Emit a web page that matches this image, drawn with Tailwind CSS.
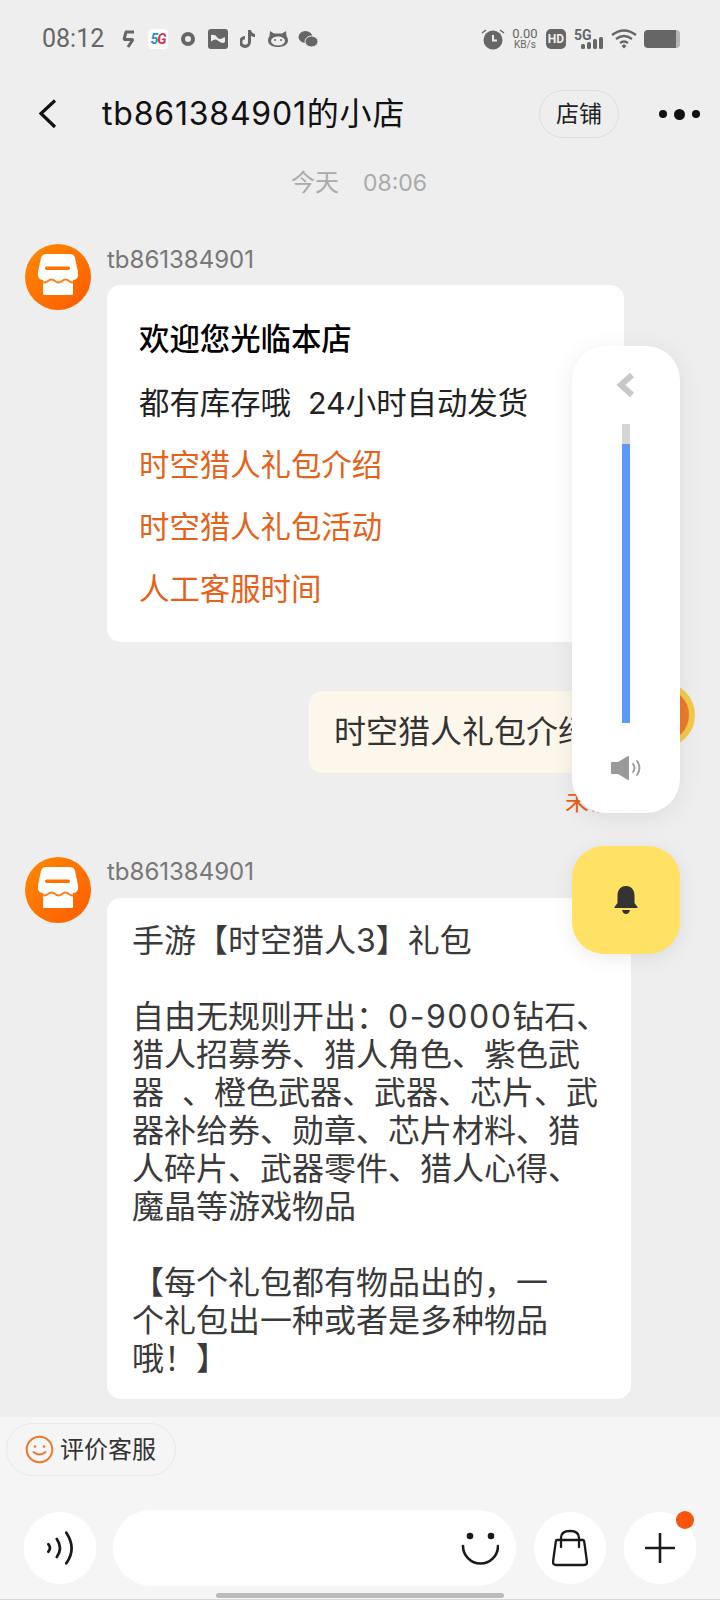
<!DOCTYPE html>
<html lang="zh">
<head>
  <meta charset="UTF-8">
  <meta name="viewport" content="width=device-width, initial-scale=1.0">
  <title>tb861384901的小店</title>
  <script src="https://cdn.jsdelivr.net/npm/@tailwindcss/browser@4"></script>
</head>
<body class="bg-[#eeeeee]">
  <div class="relative w-[720px] h-[1600px] overflow-hidden flex flex-col bg-[#eeeeee] text-[#333333] font-['Inter','Noto_Sans_CJK_SC',sans-serif]">

    <!-- status bar -->
    <div class="h-[76px] shrink-0 flex items-center pt-[2px] pl-[42px] pr-[40px] text-[#666666]">
      <span class="text-[25px] w-[79px] font-['Roboto',sans-serif]">08:12</span>
      <svg class="w-[15px] h-[19px]" viewBox="0 0 15 19"><path d="M4 2h9M5 2L3 9.500h9L7 17" fill="none" stroke="#666" stroke-width="3" stroke-linejoin="bevel"/></svg>
      <div class="ml-[12px] w-[20px] h-[20px] rounded-[4px] bg-white flex items-center justify-center text-[14px] font-bold italic tracking-[-1px] font-['Roboto',sans-serif]"><span class="text-[#2a8fd0]">5</span><span class="text-[#d8343c]">G</span></div>
      <svg class="ml-[13px] w-[14px] h-[14px]" viewBox="0 0 14 14"><circle cx="7" cy="7" r="5" fill="none" stroke="#666" stroke-width="4"/></svg>
      <svg class="ml-[13px] w-[20px] h-[20px]" viewBox="0 0 20 20"><rect width="20" height="20" rx="3" fill="#666"/><path d="M3 6q4-1 6 2t5 1.500 3-1.500v5q-2 1.500-4 .5t-4-2.500-6 1.500z" fill="#eee"/></svg>
      <svg class="ml-[12px] w-[16px] h-[20px]" viewBox="0 0 16 20"><path d="M8 1h3q.5 3 4 4v3q-2.500 0-4-1.200V13a6 6 0 1 1-6-6v3.200a2.800 2.800 0 1 0 3 2.800z" fill="#666"/></svg>
      <svg class="ml-[12px] w-[20px] h-[18px]" viewBox="0 0 20 18"><path d="M2 1l4 2.500h8L18 1l.5 5q1.500 2 1.500 4.500C20 15 15 17 10 17S0 15 0 10.500Q0 8 1.500 6z" fill="#666"/><ellipse cx="10" cy="11" rx="7" ry="4.500" fill="#eee"/><circle cx="7" cy="10" r="1" fill="#666"/><circle cx="13" cy="10" r="1" fill="#666"/></svg>
      <svg class="ml-[10px] w-[20px] h-[18px]" viewBox="0 0 20 18"><ellipse cx="7.500" cy="7" rx="7" ry="6" fill="#666"/><ellipse cx="13.500" cy="11.500" rx="6.500" ry="5.500" fill="#666" stroke="#eee" stroke-width="1"/></svg>

      <svg class="ml-auto w-[24px] h-[22px]" viewBox="0 0 24 22"><circle cx="12" cy="12" r="9.500" fill="#666"/><path d="M12 7v5.500h4" fill="none" stroke="#eee" stroke-width="2"/><path d="M1 5l4-3M23 5l-4-3" stroke="#666" stroke-width="1.500"/></svg>
      <div class="ml-[7px] w-[26px] flex flex-col items-center leading-[11px] font-['Roboto',sans-serif]"><span class="text-[13px]">0.00</span><span class="text-[10px]">KB/s</span></div>
      <div class="ml-[8px] w-[20px] h-[20px] rounded-[5px] bg-[#666666] text-[#eeeeee] text-[12px] font-bold flex items-center justify-center font-['Roboto',sans-serif]">HD</div>
      <div class="ml-[8px] relative w-[30px] h-[20px]">
        <span class="absolute left-0 top-[-4px] text-[14px] font-bold font-['Roboto',sans-serif]">5G</span>
        <svg class="absolute left-0 top-0 w-[30px] h-[20px]" viewBox="0 0 30 20"><rect x="7" y="15" width="4" height="5" rx="1.500" fill="#666"/><rect x="13" y="13" width="4" height="7" rx="1.500" fill="#666"/><rect x="19" y="10" width="4" height="10" rx="1.500" fill="#666"/><rect x="25" y="8" width="4" height="12" rx="1.500" fill="#666"/></svg>
      </div>
      <svg class="ml-[7px] w-[26px] h-[20px]" viewBox="0 0 26 20"><path d="M1 6q12-9 24 0M5 10q8-6 16 0M9 14q4-3 8 0" fill="none" stroke="#666" stroke-width="2.200"/><path d="M10.500 17l2.500-2 2.500 2-2.500 2.500z" fill="#666"/></svg>
      <div class="ml-[7px] flex items-center">
        <div class="w-[32px] h-[18px] bg-[#666666] rounded-l-[4px]"></div>
        <div class="w-[4px] h-[18px] bg-[#b5b5b5] rounded-r-[4px]"></div>
      </div>
    </div>

    <!-- nav -->
    <div class="h-[76px] shrink-0 flex items-center text-black">
      <svg class="ml-[38px] w-[20px] h-[32px]" viewBox="0 0 20 32"><path d="M17 2.500L3 15.500 17 29" fill="none" stroke="#111" stroke-width="3.200"/></svg>
      <h1 class="ml-[44px] w-[437px] text-[32px] tracking-[.8px] text-[#111111] whitespace-nowrap">tb861384901的小店</h1>
      <div class="w-[80px] h-[48px] rounded-full border border-[#dddddd] flex items-center justify-center text-[23px] text-[#222222]">店铺</div>
      <div class="ml-[40px] flex items-center gap-[4px]">
        <span class="w-[8px] h-[8px] rounded-full bg-[#111111]"></span>
        <span class="w-[11px] h-[11px] rounded-full bg-[#111111] mx-[3px]"></span>
        <span class="w-[8px] h-[8px] rounded-full bg-[#111111]"></span>
      </div>
    </div>

    <!-- messages -->
    <div class="h-[62px] shrink-0 flex items-center pl-[291px] gap-[24px] text-[24px] text-[#aaaaaa]">
      <span>今天</span><span class="text-[23px]">08:06</span>
    </div>

    <div class="flex-1 min-h-0 overflow-hidden pt-[30px] pl-[25px]">
      <div class="flex">
        <svg class="w-[66px] h-[66px] shrink-0" viewBox="0 0 66 66">
          <defs><linearGradient id="av1" x1="0" y1="0" x2="1" y2="1"><stop offset="0" stop-color="#ff8a00"/><stop offset="1" stop-color="#ff5a00"/></linearGradient></defs>
          <circle cx="33" cy="33" r="33" fill="url(#av1)"/>
          <path d="M20 10h25q4 0 5 4l3 14q1 8-5 8v14q0 1-1.500 1h-27q-1.500 0-1.500-1V36q-6 0-5-8l3-14q1-4 5-4z" fill="#fff"/>
          <path d="M16 37q3.500 3 7 0t7 0 7 0 7 0 6 0" fill="none" stroke="#ff7a10" stroke-width="1.800"/>
          <rect x="20" y="22.500" width="25" height="3.500" rx="1.750" fill="#ff7200"/>
        </svg>
        <div class="ml-[16px]">
          <div class="h-[30px] leading-[32px] text-[24px] text-[#777777]">tb861384901</div>
          <div class="mt-[11px] w-[517px] h-[357px] bg-white rounded-[14px] pt-[23px] pl-[32px] text-[30.4px] text-[#222222]">
            <div class="h-[62px] leading-[62px] mb-[2px] font-medium text-black">欢迎您光临本店</div>
            <div class="h-[62px] leading-[62px]">都有库存哦&nbsp;&nbsp;24小时自动发货</div>
            <div class="h-[62px] leading-[62px] text-[#e6611a]">时空猎人礼包介绍</div>
            <div class="h-[62px] leading-[62px] text-[#e6611a]">时空猎人礼包活动</div>
            <div class="h-[62px] leading-[62px] text-[#e6611a]">人工客服时间</div>
          </div>
        </div>
      </div>

      <div class="mt-[49px] flex pl-[284px]">
        <div class="w-[306px] h-[82px] rounded-[14px] bg-[#fdf6ea] pl-[25px] leading-[82px] text-[32px] whitespace-nowrap">时空猎人礼包介绍</div>
        <svg class="ml-[14px] -mt-[9px] w-[66px] h-[66px] shrink-0" viewBox="0 0 66 66"><circle cx="33" cy="33" r="30" fill="#ec7a2c" stroke="#f1cb4c" stroke-width="6"/></svg>
      </div>
      <div class="h-[46px] leading-[58px] pl-[540px] text-[24px] text-[#e6611a]">未读</div>

      <div class="mt-[38px] flex">
        <svg class="w-[66px] h-[66px] shrink-0" viewBox="0 0 66 66">
          <defs><linearGradient id="av2" x1="0" y1="0" x2="1" y2="1"><stop offset="0" stop-color="#ff8a00"/><stop offset="1" stop-color="#ff5a00"/></linearGradient></defs>
          <circle cx="33" cy="33" r="33" fill="url(#av2)"/>
          <path d="M20 10h25q4 0 5 4l3 14q1 8-5 8v14q0 1-1.500 1h-27q-1.500 0-1.500-1V36q-6 0-5-8l3-14q1-4 5-4z" fill="#fff"/>
          <path d="M16 37q3.500 3 7 0t7 0 7 0 7 0 6 0" fill="none" stroke="#ff7a10" stroke-width="1.800"/>
          <rect x="20" y="22.500" width="25" height="3.500" rx="1.750" fill="#ff7200"/>
        </svg>
        <div class="ml-[16px]">
          <div class="h-[30px] leading-[30px] text-[24px] text-[#777777]">tb861384901</div>
          <div class="mt-[11px] w-[524px] h-[501px] bg-white rounded-[14px] pt-[24px] pl-[25px] text-[32px] leading-[38px] whitespace-nowrap text-[#3a3a3a]">
            手游【时空猎人3】礼包<br><br>
            自由无规则开出：<span class="tracking-[1.500px]">0-9000</span>钻石、<br>
            猎人招募券、猎人角色、紫色武<br>
            器&nbsp;&nbsp;、橙色武器、武器、芯片、武<br>
            器补给券、勋章、芯片材料、猎<br>
            人碎片、武器零件、猎人心得、<br>
            魔晶等游戏物品<br><br>
            【每个礼包都有物品出的，一<br>
            个礼包出一种或者是多种物品<br>
            哦！】
          </div>
        </div>
      </div>
    </div>

    <!-- bottom bar -->
    <div class="h-[183px] shrink-0 bg-[#f5f5f5] relative">
      <div class="mt-[6px] ml-[6px] w-[170px] h-[53px] rounded-full border border-[#e8e8e8] flex items-center pl-[18px] text-[24px] text-[#333333]">
        <svg class="w-[29px] h-[29px] shrink-0" viewBox="0 0 29 29"><circle cx="14.500" cy="14.500" r="12.800" fill="none" stroke="#e8792f" stroke-width="2"/><circle cx="10" cy="11.500" r="1.300" fill="#e8792f"/><circle cx="19" cy="11.500" r="1.300" fill="#e8792f"/><path d="M8.500 17q6 5 12 0" fill="none" stroke="#e8792f" stroke-width="2" stroke-linecap="round"/></svg>
        <span class="ml-[6px]">评价客服</span>
      </div>
      <div class="mt-[34px] ml-[24px] flex items-center">
        <div class="w-[72px] h-[72px] rounded-full bg-white flex items-center justify-center">
          <svg class="w-[30px] h-[38px]" viewBox="0 0 28 36"><path d="M3 14q3 3 0 7M11 9q6 9 0 17M20 3q10 15 0 29" transform="translate(0 0.500)" fill="none" stroke="#1a1a1a" stroke-width="2.600" stroke-linecap="round"/></svg>
        </div>
        <div class="ml-[17px] w-[403px] h-[76px] rounded-full bg-white flex items-center justify-end pr-[17px]">
          <svg class="w-[38px] h-[34px]" viewBox="0 0 38 34"><circle cx="9" cy="5" r="3.300" fill="#1a1a1a"/><circle cx="30" cy="5" r="3.300" fill="#1a1a1a"/><path d="M2 15a17.500 17.500 0 0 0 35 0" fill="none" stroke="#1a1a1a" stroke-width="2.600" stroke-linecap="round"/></svg>
        </div>
        <div class="ml-[18px] w-[72px] h-[72px] rounded-full bg-white flex items-center justify-center">
          <svg class="w-[36px] h-[38px]" viewBox="0 0 36 38"><path d="M5 11h26q1 0 1.200 1.500L35 33q0 3-3 3H4q-3 0-3-3L3.800 12.500Q4 11 5 11z" fill="none" stroke="#1a1a1a" stroke-width="2.300"/><path d="M9 18V9q0-7 9-7t9 7v9" fill="none" stroke="#1a1a1a" stroke-width="2.300" stroke-linecap="round"/></svg>
        </div>
        <div class="relative ml-[18px] w-[72px] h-[72px] rounded-full bg-white flex items-center justify-center">
          <svg class="w-[30px] h-[30px]" viewBox="0 0 30 30"><path d="M15 1v28M1 15h28" stroke="#1a1a1a" stroke-width="2.600" stroke-linecap="round"/></svg>
          <span class="absolute right-[2px] top-[-1px] w-[18px] h-[18px] rounded-full bg-[#f9540a]"></span>
        </div>
      </div>
      <div class="absolute left-[216px] bottom-[2px] w-[288px] h-[5px] rounded-full bg-[#bbbbbb]"></div>
      <div class="absolute left-0 right-0 bottom-0 h-px bg-[#d9d9d9]"></div>
    </div>

    <!-- floating volume panel -->
    <div class="absolute left-[572px] top-[346px] w-[108px] h-[467px] rounded-[34px] bg-white shadow-[0_4px_24px_rgba(0,0,0,0.08)] flex flex-col items-center">
      <svg class="mt-[26px] w-[20px] h-[26px]" viewBox="0 0 20 26"><path d="M16 3L5 13l11 10" fill="none" stroke="#c8c8c8" stroke-width="6"/></svg>
      <div class="mt-[26px] w-[8px] h-[299px] bg-[#d4d4d4] flex flex-col justify-end">
        <div class="h-[279px] bg-[#5b9bf5]"></div>
      </div>
      <svg class="mt-[32px] w-[32px] h-[26px]" viewBox="0 0 32 26"><path d="M1 8q0-1 1-1h6l10-6q1-.5 1 1v22q0 1.500-1 1L8 19H2q-1 0-1-1z" fill="#999"/><path d="M23 9q3 4 0 8M27 6q5 7 0 14" fill="none" stroke="#999" stroke-width="1.800" stroke-linecap="round"/></svg>
    </div>

    <!-- floating bell -->
    <div class="absolute left-[572px] top-[846px] w-[108px] h-[108px] rounded-[32px] bg-[#ffe264] shadow-[0_4px_20px_rgba(0,0,0,0.08)] flex items-center justify-center">
      <svg class="w-[24px] h-[30px]" viewBox="0 0 24 30"><path d="M12 1c6 0 8.500 4.500 8.500 10v7l3 4v1H.5v-1l3-4v-7C3.500 5.500 6 1 12 1z" fill="#333"/><path d="M8 25h8q-1 4-4 4t-4-4z" fill="#333"/></svg>
    </div>
  </div>
</body>
</html>
